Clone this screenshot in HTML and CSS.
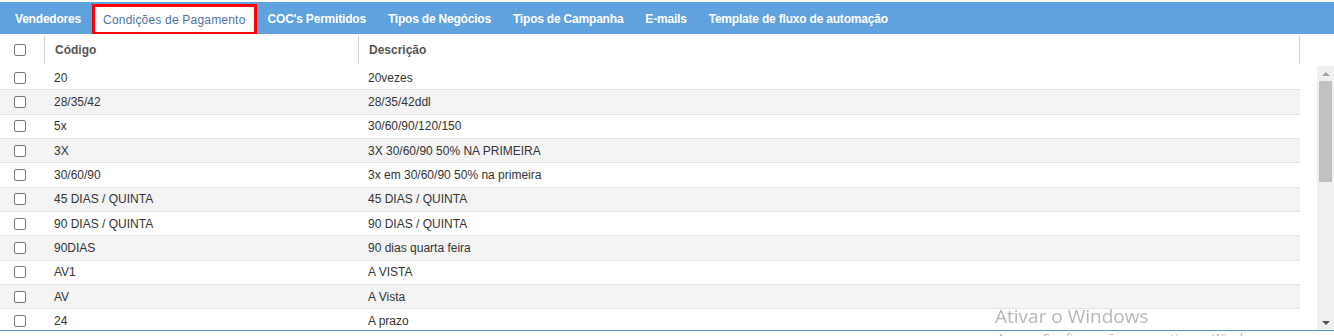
FILE: index.html
```html
<!DOCTYPE html>
<html lang="pt-BR">
<head>
    <meta charset="UTF-8">
    <meta name="viewport" content="width=device-width, initial-scale=1.0">
    <title>Condições de Pagamento</title>
    <link rel="stylesheet" href="styles.css">
</head>
<body>

    <!-- Abas -->
    <nav class="tabs">
        <a class="tab">Vendedores</a>
        <a class="tab active">Condições de Pagamento</a>
        <a class="tab">COC's Permitidos</a>
        <a class="tab">Tipos de Negócios</a>
        <a class="tab">Tipos de Campanha</a>
        <a class="tab">E-mails</a>
        <a class="tab">Template de fluxo de automação</a>
    </nav>

    <!-- Grid -->
    <div class="grid">
        <div class="grid-head">
            <div class="cell cell-check"><span class="check"></span></div>
            <div class="cell cell-code">Código</div>
            <div class="cell cell-desc">Descrição</div>
        </div>

        <div class="grid-body">
            <div class="rows">
                <div class="row"><div class="cell cell-check"><span class="check"></span></div><div class="cell cell-code">20</div><div class="cell cell-desc">20vezes</div></div>
                <div class="row"><div class="cell cell-check"><span class="check"></span></div><div class="cell cell-code">28/35/42</div><div class="cell cell-desc">28/35/42ddl</div></div>
                <div class="row"><div class="cell cell-check"><span class="check"></span></div><div class="cell cell-code">5x</div><div class="cell cell-desc">30/60/90/120/150</div></div>
                <div class="row"><div class="cell cell-check"><span class="check"></span></div><div class="cell cell-code">3X</div><div class="cell cell-desc">3X 30/60/90 50% NA PRIMEIRA</div></div>
                <div class="row"><div class="cell cell-check"><span class="check"></span></div><div class="cell cell-code">30/60/90</div><div class="cell cell-desc">3x em 30/60/90 50% na primeira</div></div>
                <div class="row"><div class="cell cell-check"><span class="check"></span></div><div class="cell cell-code">45 DIAS / QUINTA</div><div class="cell cell-desc">45 DIAS / QUINTA</div></div>
                <div class="row"><div class="cell cell-check"><span class="check"></span></div><div class="cell cell-code">90 DIAS / QUINTA</div><div class="cell cell-desc">90 DIAS / QUINTA</div></div>
                <div class="row"><div class="cell cell-check"><span class="check"></span></div><div class="cell cell-code">90DIAS</div><div class="cell cell-desc">90 dias quarta feira</div></div>
                <div class="row"><div class="cell cell-check"><span class="check"></span></div><div class="cell cell-code">AV1</div><div class="cell cell-desc">A VISTA</div></div>
                <div class="row"><div class="cell cell-check"><span class="check"></span></div><div class="cell cell-code">AV</div><div class="cell cell-desc">A Vista</div></div>
                <div class="row"><div class="cell cell-check"><span class="check"></span></div><div class="cell cell-code">24</div><div class="cell cell-desc">A prazo</div></div>
            </div>

            <!-- Barra de rolagem -->
            <div class="scrollbar">
                <span class="arrow arrow-up"></span>
                <div class="track"><div class="thumb"></div></div>
                <span class="arrow arrow-down"></span>
            </div>
        </div>
    </div>

    <!-- Marca d'agua do Windows -->
    <div class="watermark">
        <div class="wm-title">Ativar o Windows</div>
        <div class="wm-sub">Acesse Configurações para ativar o Windows.</div>
    </div>

</body>
</html>
```

FILE: styles.css
```css
/* Tela de condicoes de pagamento */
body {
    margin: 0;
    font-family: "Liberation Sans", Arial, sans-serif;
    font-size: 12px;
    color: #333;
    background-color: #fff;
    overflow: hidden;
}

.tabs {
    display: flex;
    align-items: flex-end;
    margin-top: 2px;
    height: 32px;
    padding-left: 4px;
    background-color: #5fa2dd;
}

.tab {
    display: flex;
    align-items: center;
    height: 30px;
    padding: 0 11px;
    color: #fff;
    font-weight: bold;
    letter-spacing: -0.2px;
    cursor: pointer;
    box-sizing: border-box;
}

.tab.active {
    background-color: #fff;
    border: 3px solid #f00;
    border-bottom-width: 2px;
    padding: 0 8px;
    color: #4f74a8;
    font-weight: normal;
    letter-spacing: 0.2px;
}

.grid {
    border-bottom: 1px solid #5b9bd5;
}

.grid-head {
    display: flex;
    width: 1300px;
    height: 32px;
}

.grid-head .cell {
    color: #555;
    font-weight: bold;
}

.grid-head .cell-code,
.grid-head .cell-desc {
    border-left: 1px solid #d4d4d4;
    margin-top: 2px;
    margin-bottom: 2px;
}

.grid-head .cell-desc {
    border-right: 1px solid #d4d4d4;
}

.cell {
    display: flex;
    align-items: center;
    box-sizing: border-box;
}

.cell-check {
    width: 44px;
    padding-left: 14px;
}

.cell-code {
    width: 314px;
    padding-left: 10px;
}

.cell-desc {
    width: 942px;
    padding-left: 10px;
}

.check {
    width: 10px;
    height: 10px;
    border: 1px solid #767676;
    border-radius: 2px;
    background-color: #fff;
}

.grid-body {
    display: flex;
    justify-content: space-between;
    height: 264px;
    overflow: hidden;
}

.rows {
    width: 1300px;
}

.row {
    display: flex;
    height: 24.35px;
    border-bottom: 1px solid #e4e4e4;
    box-sizing: border-box;
}

.row:nth-child(even) {
    background-color: #f4f4f4;
}

.scrollbar {
    display: flex;
    flex-direction: column;
    align-items: center;
    width: 17px;
    background-color: #f0f0f0;
}

.track {
    flex: 1;
    width: 100%;
    padding: 0 2px;
    box-sizing: border-box;
}

.thumb {
    height: 101px;
    background-color: #c1c1c1;
}

.arrow {
    width: 0;
    height: 0;
    border-left: 4px solid transparent;
    border-right: 4px solid transparent;
}

.arrow-up {
    margin: 6px 0 5px;
    border-bottom: 4px solid #a3a3a3;
}

.arrow-down {
    margin: 5px 0 5px;
    border-top: 4px solid #505050;
}

/* Sobrepoe a tela */
.watermark {
    position: fixed;
    left: 995px;
    top: 303px;
    font-family: "Open Sans", "Noto Sans", sans-serif;
    color: rgba(160, 160, 160, 0.75);
    pointer-events: none;
}

.wm-title {
    font-size: 19px;
    line-height: 26px;
}

.wm-sub {
    font-size: 13px;
    line-height: 18px;
    margin-left: 2px;
}
```
